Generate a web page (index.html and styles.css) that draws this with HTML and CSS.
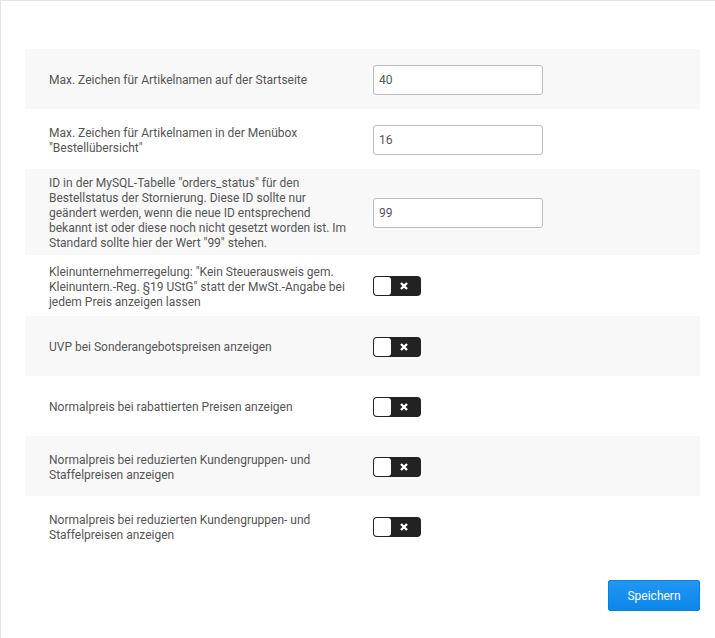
FILE: index.html
```html
<!DOCTYPE html>
<html lang="de">
<head>
<meta charset="utf-8">
<title>Einstellungen</title>
<link rel="stylesheet" href="styles.css">
</head>
<body>
<div class="page">
  <div class="rows">
    <div class="row">
      <div class="label">Max. Zeichen für Artikelnamen auf der Startseite</div>
      <div class="control"><input class="field" type="text" value="40"></div>
    </div>
    <div class="row">
      <div class="label">Max. Zeichen für Artikelnamen in der Menübox "Bestellübersicht"</div>
      <div class="control"><input class="field" type="text" value="16"></div>
    </div>
    <div class="row">
      <div class="label">ID in der MySQL-Tabelle "orders_status" für den Bestellstatus der Stornierung. Diese ID sollte nur geändert werden, wenn die neue ID entsprechend bekannt ist oder diese noch nicht gesetzt worden ist. Im Standard sollte hier der Wert "99" stehen.</div>
      <div class="control"><input class="field" type="text" value="99"></div>
    </div>
    <div class="row row-tall">
      <div class="label">Kleinunternehmerregelung: "Kein Steuerausweis gem. Kleinuntern.-Reg. §19 UStG" statt der MwSt.-Angabe bei jedem Preis anzeigen lassen</div>
      <div class="control"><span class="toggle"><span class="knob"></span><span class="x"><svg viewBox="0 0 8 8" width="8" height="8"><path d="M1 1L7 7M7 1L1 7" stroke="#fff" stroke-width="2.4" stroke-linecap="butt"/></svg></span></span></div>
    </div>
    <div class="row">
      <div class="label">UVP bei Sonderangebotspreisen anzeigen</div>
      <div class="control"><span class="toggle"><span class="knob"></span><span class="x"><svg viewBox="0 0 8 8" width="8" height="8"><path d="M1 1L7 7M7 1L1 7" stroke="#fff" stroke-width="2.4" stroke-linecap="butt"/></svg></span></span></div>
    </div>
    <div class="row">
      <div class="label">Normalpreis bei rabattierten Preisen anzeigen</div>
      <div class="control"><span class="toggle"><span class="knob"></span><span class="x"><svg viewBox="0 0 8 8" width="8" height="8"><path d="M1 1L7 7M7 1L1 7" stroke="#fff" stroke-width="2.4" stroke-linecap="butt"/></svg></span></span></div>
    </div>
    <div class="row">
      <div class="label">Normalpreis bei reduzierten Kundengruppen- und Staffelpreisen anzeigen</div>
      <div class="control"><span class="toggle"><span class="knob"></span><span class="x"><svg viewBox="0 0 8 8" width="8" height="8"><path d="M1 1L7 7M7 1L1 7" stroke="#fff" stroke-width="2.4" stroke-linecap="butt"/></svg></span></span></div>
    </div>
    <div class="row">
      <div class="label">Normalpreis bei reduzierten Kundengruppen- und Staffelpreisen anzeigen</div>
      <div class="control"><span class="toggle"><span class="knob"></span><span class="x"><svg viewBox="0 0 8 8" width="8" height="8"><path d="M1 1L7 7M7 1L1 7" stroke="#fff" stroke-width="2.4" stroke-linecap="butt"/></svg></span></span></div>
    </div>
  </div>
  <div class="actions">
    <button class="btn" type="button">Speichern</button>
  </div>
</div>
</body>
</html>
```

FILE: styles.css
```css
html, body {
  margin: 0;
  padding: 0;
  background: #fff;
}
body {
  font-family: Roboto, "Liberation Sans", Arial, sans-serif;
  font-size: 12px;
  color: #555;
}
.page {
  border-top: 1px solid #e3e3e3;
  border-left: 1px solid #e3e3e3;
  padding: 48px 15px 27px 24px;
  min-height: 638px;
  box-sizing: border-box;
}
.rows {
  display: flex;
  flex-direction: column;
}
.row {
  display: flex;
  align-items: center;
  min-height: 60px;
  box-sizing: border-box;
  padding: 7px 24px 4px 24px;
  gap: 24px;
}
.row-tall {
  min-height: 61px;
}
.row:nth-child(odd) {
  background: #f8f8f8;
}
.label {
  width: 300px;
  flex: none;
  line-height: 15px;
}
.control {
  display: flex;
  align-items: center;
  margin-top: -2px;
}
.field {
  width: 170px;
  height: 30px;
  box-sizing: border-box;
  border: 1px solid #bdbdbd;
  border-radius: 3px;
  background: #fff;
  padding: 0 5px;
  font-family: Roboto, "Liberation Sans", Arial, sans-serif;
  font-size: 12px;
  color: #555;
  outline: none;
}
.toggle {
  display: flex;
  align-items: center;
  width: 48px;
  height: 20px;
  box-sizing: border-box;
  background: #222;
  border-radius: 4px;
  padding: 1px;
}
.knob {
  width: 17px;
  height: 18px;
  background: #fff;
  border-radius: 3px;
  flex: none;
}
.x {
  flex: 1;
  display: flex;
  align-items: center;
  justify-content: center;
  height: 18px;
  padding-right: 3px;
}
.x svg {
  display: block;
}
.actions {
  display: flex;
  justify-content: flex-end;
  margin-top: 24px;
}
.btn {
  width: 92px;
  height: 31px;
  border: 1px solid #0b7fd9;
  border-radius: 2px;
  background: linear-gradient(#2196f3, #0c87ea);
  color: #fff;
  font-family: Roboto, "Liberation Sans", Arial, sans-serif;
  font-size: 12px;
  cursor: pointer;
}
```
